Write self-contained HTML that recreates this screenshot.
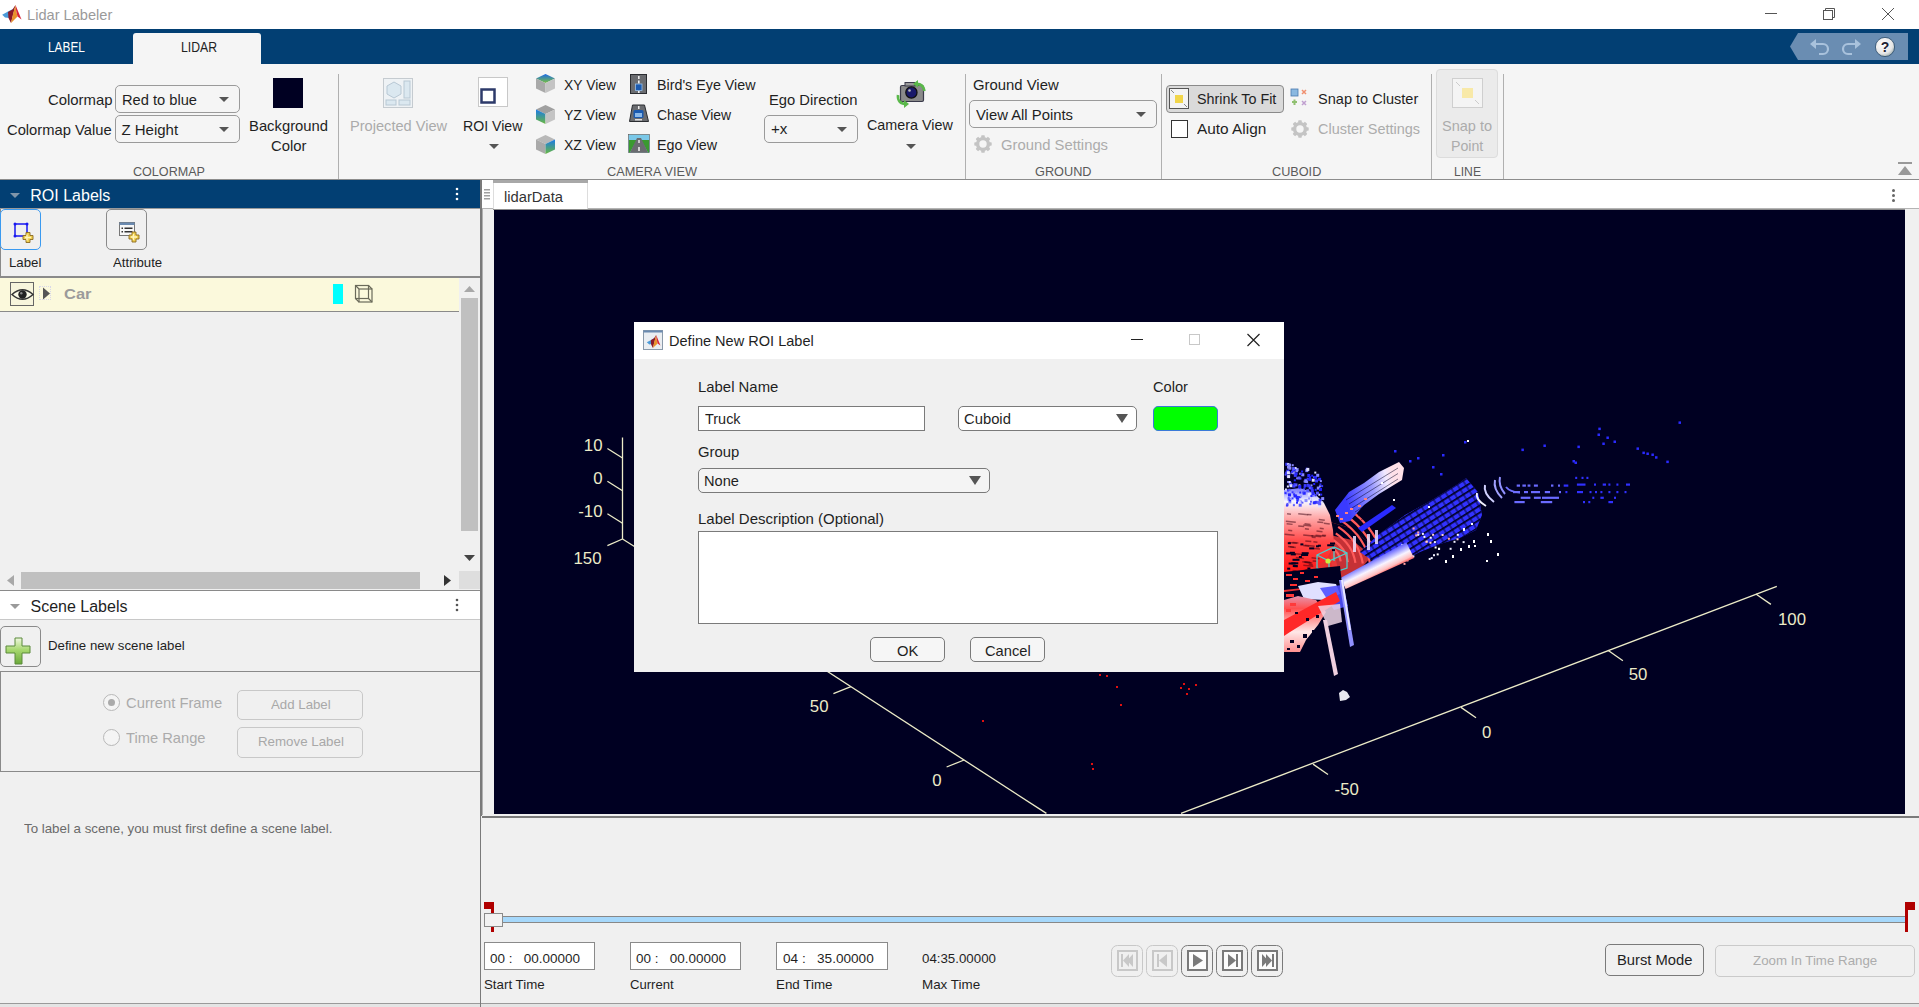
<!DOCTYPE html>
<html><head><meta charset="utf-8"><style>
html,body{margin:0;padding:0;width:1919px;height:1007px;overflow:hidden;background:#f0f0f0;}
.r{position:absolute;box-sizing:border-box;}
svg.r{overflow:visible;}
.t{position:absolute;white-space:pre;line-height:20px;font-family:"Liberation Sans",sans-serif;transform-origin:0 0;}
</style></head><body>
<div class="r" style="left:0px;top:0px;width:1919px;height:29px;background:#fff"></div>
<svg class="r" style="left:0px;top:0px;" width="24" height="25" viewBox="0 0 24 25">
<polygon points="2.2,14.8 8,11.5 13,9 12.5,14 9.5,18 5,17.5" fill="#4a9ad8"/>
<polygon points="8,12 12.5,9.5 15.5,5 14,11 11,23 8.5,18" fill="#8a1a2a"/>
<polygon points="15.5,5 16,10 17.5,16.5 11,23 13,14" fill="#e8922a"/>
<polygon points="15.5,5 21.5,19.5 17.5,16.5 16,10" fill="#d8283a"/>
</svg>
<div class="t" style="left:27.40px;top:5px;font-size:15px;color:#9a9a9a;transform:scaleX(0.9749);">Lidar Labeler</div>
<div class="r" style="left:1765px;top:13px;width:12px;height:1px;background:#555"></div>
<svg class="r" style="left:1820px;top:5px;" width="18" height="18" viewBox="0 0 18 18"><rect x="3.5" y="5.5" width="9" height="9" fill="none" stroke="#555"/><path d="M5.5 5.5V3.5H14.5V12.5H12.5" fill="none" stroke="#555"/></svg>
<svg class="r" style="left:1878px;top:5px;" width="20" height="18" viewBox="0 0 20 18"><path d="M4 3L16 15M16 3L4 15" stroke="#555" stroke-width="1"/></svg>
<div class="r" style="left:0px;top:29px;width:1919px;height:35px;background:#023f73"></div>
<div class="r" style="left:133px;top:33px;width:128px;height:31px;background:#f5f5f5;border-radius:3px 3px 0 0"></div>
<div class="t" style="left:48.10px;top:37px;font-size:14px;color:#ffffff;transform:scaleX(0.8461);">LABEL</div>
<div class="t" style="left:181.00px;top:37px;font-size:14px;color:#222;transform:scaleX(0.8732);">LIDAR</div>
<svg class="r" style="left:1788px;top:32px;" width="122" height="30" viewBox="0 0 122 30">
<polygon points="2,14.5 10,1 120,1 120,28 10,28" fill="#6a8db2"/>
<g fill="none" stroke="#a9c2dc" stroke-width="2.2">
<path d="M27 12 H35 A5 5 0 0 1 35 22 H31"/>
<path d="M68 12 H60 A5 5 0 0 0 60 22 H64"/>
</g>
<polygon points="22,12 28,7 28,17" fill="#a9c2dc"/>
<polygon points="73,12 67,7 67,17" fill="#a9c2dc"/>
<defs><radialGradient id="hg" cx="40%" cy="35%" r="70%"><stop offset="0" stop-color="#fff"/><stop offset="0.7" stop-color="#e6e6e6"/><stop offset="1" stop-color="#9aa"/></radialGradient></defs>
<circle cx="97" cy="15" r="9.6" fill="url(#hg)" stroke="#2a4a6a" stroke-width="0.8"/>
<text x="97" y="20" text-anchor="middle" font-family="Liberation Sans" font-weight="bold" font-size="14" fill="#223">?</text>
</svg>
<div class="r" style="left:0px;top:64px;width:1919px;height:115px;background:#f5f5f5"></div>
<div class="r" style="left:0px;top:179px;width:1919px;height:1px;background:#8c8c8c"></div>
<div class="r" style="left:338px;top:74px;width:1px;height:105px;background:#b0b0b0"></div>
<div class="r" style="left:965px;top:74px;width:1px;height:105px;background:#b0b0b0"></div>
<div class="r" style="left:1161px;top:74px;width:1px;height:105px;background:#b0b0b0"></div>
<div class="r" style="left:1431px;top:74px;width:1px;height:105px;background:#b0b0b0"></div>
<div class="r" style="left:1503px;top:74px;width:1px;height:105px;background:#b0b0b0"></div>
<svg class="r" style="left:1897px;top:161px;" width="16" height="16" viewBox="0 0 16 16"><rect x="1" y="1" width="14" height="2" fill="#999"/><polygon points="8,5 1,14 15,14" fill="#999"/></svg>
<div class="t" style="left:47.50px;top:90px;font-size:15px;color:#1f1f1f;transform:scaleX(0.9919);">Colormap</div>
<div class="t" style="left:7.40px;top:120px;font-size:15px;color:#1f1f1f;transform:scaleX(0.9829);">Colormap Value</div>
<div class="r" style="left:115px;top:85px;width:125px;height:28px;background:#f5f5f5;border:1px solid #9a9a9a;border-radius:5px"></div>
<div class="t" style="left:122.00px;top:90px;font-size:15px;color:#1f1f1f;transform:scaleX(0.9775);">Red to blue</div>
<svg class="r" style="left:219px;top:97px;" width="10" height="5" viewBox="0 0 10 5"><polygon points="0,0 10,0 5.0,5" fill="#555"/></svg>
<div class="r" style="left:115px;top:115px;width:125px;height:28px;background:#f5f5f5;border:1px solid #9a9a9a;border-radius:5px"></div>
<div class="t" style="left:121.40px;top:120px;font-size:15px;color:#1f1f1f;">Z Height</div>
<svg class="r" style="left:219px;top:127px;" width="10" height="5" viewBox="0 0 10 5"><polygon points="0,0 10,0 5.0,5" fill="#555"/></svg>
<div class="r" style="left:273px;top:78px;width:30px;height:30px;background:#000022"></div>
<div class="t" style="left:249.00px;top:116px;font-size:15px;color:#1f1f1f;transform:scaleX(0.9872);">Background</div>
<div class="t" style="left:270.50px;top:135.5px;font-size:15px;color:#1f1f1f;transform:scaleX(0.9902);">Color</div>
<div class="t" style="left:133.00px;top:162px;font-size:13.5px;color:#5a5a5a;transform:scaleX(0.9316);">COLORMAP</div>
<svg class="r" style="left:383px;top:78px;" width="30" height="30" viewBox="0 0 30 30">
<rect x="0.5" y="0.5" width="29" height="29" fill="#eef2f5" stroke="#c5cbd0"/>
<polygon points="11,4 18,8 18,16 11,20 4,16 4,8" fill="#dbe8f0" stroke="#b8c8d4"/>
<rect x="21" y="3" width="6" height="17" fill="#dbe8f0" stroke="#b8c8d4"/>
<rect x="3" y="22" width="10" height="5" fill="#dbe8f0" stroke="#b8c8d4"/>
<rect x="16" y="22" width="11" height="5" fill="#dbe8f0" stroke="#b8c8d4"/>
</svg>
<div class="t" style="left:349.80px;top:115.5px;font-size:15px;color:#ababab;transform:scaleX(0.9737);">Projected View</div>
<svg class="r" style="left:478px;top:77px;" width="30" height="30" viewBox="0 0 30 30">
<rect x="0.5" y="0.5" width="29" height="29" fill="#fff" stroke="#c8c8c8"/>
<rect x="3.5" y="12.5" width="13" height="13" fill="#fff" stroke="#2d3a6a" stroke-width="2.5"/>
</svg>
<div class="t" style="left:463.00px;top:115.5px;font-size:15px;color:#1f1f1f;transform:scaleX(0.9422);">ROI View</div>
<svg class="r" style="left:489px;top:144px;" width="10" height="5" viewBox="0 0 10 5"><polygon points="0,0 10,0 5.0,5" fill="#555"/></svg>
<svg class="r" style="left:535px;top:73px;" width="21" height="21" viewBox="0 0 21 21"><defs>
<linearGradient id="cgt" x1="0" y1="0" x2="0" y2="1"><stop offset="0" stop-color="#1a6ae8"/><stop offset="1" stop-color="#7ac040"/></linearGradient>
<linearGradient id="cgl" x1="0" y1="0" x2="0" y2="1"><stop offset="0" stop-color="#1a7ae8"/><stop offset="1" stop-color="#6ab840"/></linearGradient>
</defs>
<polygon points="10.5,1 20,5.5 10.5,10 1,5.5" fill="url(#cgt)"/>
<polygon points="1,5.5 10.5,10 10.5,20 1,15.5" fill="#a9a9a9"/>
<polygon points="10.5,10 20,5.5 20,15.5 10.5,20" fill="#c4c4c4"/></svg>
<svg class="r" style="left:535px;top:104px;" width="21" height="21" viewBox="0 0 21 21">
<polygon points="10.5,1 20,5.5 10.5,10 1,5.5" fill="#a0a0a0"/>
<polygon points="1,5.5 10.5,10 10.5,20 1,15.5" fill="url(#cgl)"/>
<polygon points="10.5,10 20,5.5 20,15.5 10.5,20" fill="#c4c4c4"/></svg>
<svg class="r" style="left:535px;top:134px;" width="21" height="21" viewBox="0 0 21 21">
<polygon points="10.5,1 20,5.5 10.5,10 1,5.5" fill="#b8b8b8"/>
<polygon points="1,5.5 10.5,10 10.5,20 1,15.5" fill="#a9a9a9"/>
<polygon points="10.5,10 20,5.5 20,15.5 10.5,20" fill="url(#cgl)"/></svg>
<div class="t" style="left:564.00px;top:74.6px;font-size:15px;color:#1f1f1f;transform:scaleX(0.9257);">XY View</div>
<div class="t" style="left:564.00px;top:104.8px;font-size:15px;color:#1f1f1f;transform:scaleX(0.9344);">YZ View</div>
<div class="t" style="left:564.00px;top:135px;font-size:15px;color:#1f1f1f;transform:scaleX(0.9344);">XZ View</div>
<svg class="r" style="left:629px;top:73px;" width="20" height="22" viewBox="0 0 20 22">
<rect x="1.5" y="1.5" width="16" height="19" fill="#6a6c70" stroke="#2a2c30"/>
<rect x="9" y="3" width="1.6" height="3" fill="#eee"/><rect x="9" y="7.5" width="1.6" height="3" fill="#eee"/><rect x="9" y="18" width="1.6" height="2" fill="#eee"/>
<rect x="6.5" y="11" width="6.5" height="6.5" fill="#1a5ab0" stroke="#9ac0e8" stroke-width="0.8"/>
</svg>
<svg class="r" style="left:628px;top:104px;" width="22" height="19" viewBox="0 0 22 19">
<polygon points="4.5,1 16.5,1 20.5,17.5 1.5,17.5" fill="#6a6c70" stroke="#2a2c30"/>
<rect x="10" y="2" width="1.5" height="3" fill="#eee"/>
<rect x="5.5" y="6" width="10" height="8" rx="1.5" fill="#1a5ab0"/>
<rect x="7" y="9" width="7" height="4" fill="#8ab8e8"/>
<rect x="7" y="15" width="7" height="1.5" fill="#ddd"/>
</svg>
<svg class="r" style="left:628px;top:134px;" width="22" height="19" viewBox="0 0 22 19">
<rect x="0.5" y="0.5" width="21" height="18" fill="#7ac8e8" stroke="#555" stroke-width="0.6"/>
<polygon points="1,6 9,6 2,18.5 1,18.5" fill="#3a9a30"/>
<polygon points="21,6 13,6 20,18.5 21,18.5" fill="#3a9a30"/>
<polygon points="9,4 13,4 20,18.5 2,18.5" fill="#6a6c70"/>
<rect x="10.3" y="6" width="1.4" height="3" fill="#eee"/><rect x="10.2" y="13" width="1.6" height="4" fill="#eee"/>
</svg>
<div class="t" style="left:657.40px;top:74.6px;font-size:15px;color:#1f1f1f;transform:scaleX(0.9517);">Bird&#x27;s Eye View</div>
<div class="t" style="left:657.40px;top:104.8px;font-size:15px;color:#1f1f1f;transform:scaleX(0.9298);">Chase View</div>
<div class="t" style="left:657.40px;top:135px;font-size:15px;color:#1f1f1f;transform:scaleX(0.9533);">Ego View</div>
<div class="t" style="left:768.60px;top:90px;font-size:15px;color:#1f1f1f;transform:scaleX(0.9825);">Ego Direction</div>
<div class="r" style="left:764px;top:115px;width:94px;height:28px;background:#f5f5f5;border:1px solid #9a9a9a;border-radius:5px"></div>
<div class="t" style="left:771.40px;top:119.30000000000001px;font-size:15px;color:#1f1f1f;transform:scaleX(1.0077);">+x</div>
<svg class="r" style="left:837px;top:127px;" width="10" height="5" viewBox="0 0 10 5"><polygon points="0,0 10,0 5.0,5" fill="#555"/></svg>
<svg class="r" style="left:893px;top:78px;" width="34" height="30" viewBox="0 0 34 30">
<rect x="7.5" y="7.5" width="23" height="16" rx="1.5" fill="#8a8a8a" stroke="#3a3a4a" stroke-width="1.2"/>
<rect x="12" y="4.5" width="10" height="3.5" fill="#9a9a9a" stroke="#3a3a4a" stroke-width="1"/>
<circle cx="18.4" cy="14.5" r="5.6" fill="#1a1a6a" stroke="#111" stroke-width="1.3"/>
<circle cx="16.5" cy="12.5" r="1.3" fill="#bbb"/>
<path d="M22 6 Q30 5 31.5 13" fill="none" stroke="#5ab84a" stroke-width="2.6"/>
<polygon points="20,6 25,2 25,9.5" fill="#5ab84a"/>
<path d="M5 17 Q4 26 14 26" fill="none" stroke="#5ab84a" stroke-width="2.6"/>
<polygon points="16,26 11,22 11,30" fill="#5ab84a"/>
</svg>
<div class="t" style="left:867.10px;top:115.30000000000001px;font-size:15px;color:#1f1f1f;transform:scaleX(0.9557);">Camera View</div>
<svg class="r" style="left:906px;top:144px;" width="10" height="5" viewBox="0 0 10 5"><polygon points="0,0 10,0 5.0,5" fill="#555"/></svg>
<div class="t" style="left:606.80px;top:162px;font-size:13.5px;color:#5a5a5a;transform:scaleX(0.9453);">CAMERA VIEW</div>
<div class="t" style="left:973.10px;top:75px;font-size:15px;color:#1f1f1f;transform:scaleX(0.9910);">Ground View</div>
<div class="r" style="left:969px;top:100px;width:188px;height:28px;background:#f5f5f5;border:1px solid #9a9a9a;border-radius:5px"></div>
<div class="t" style="left:975.60px;top:104.7px;font-size:15px;color:#1f1f1f;transform:scaleX(0.9888);">View All Points</div>
<svg class="r" style="left:1136px;top:112px;" width="10" height="5" viewBox="0 0 10 5"><polygon points="0,0 10,0 5.0,5" fill="#555"/></svg>
<svg class="r" style="left:974px;top:135px;" width="18" height="18" viewBox="0 0 18 18"><rect x="7.2" y="0.3" width="3.6" height="4" rx="0.8" fill="#c4c4c4" transform="rotate(0 9.0 9.0)"/><rect x="7.2" y="0.3" width="3.6" height="4" rx="0.8" fill="#c4c4c4" transform="rotate(45 9.0 9.0)"/><rect x="7.2" y="0.3" width="3.6" height="4" rx="0.8" fill="#c4c4c4" transform="rotate(90 9.0 9.0)"/><rect x="7.2" y="0.3" width="3.6" height="4" rx="0.8" fill="#c4c4c4" transform="rotate(135 9.0 9.0)"/><rect x="7.2" y="0.3" width="3.6" height="4" rx="0.8" fill="#c4c4c4" transform="rotate(180 9.0 9.0)"/><rect x="7.2" y="0.3" width="3.6" height="4" rx="0.8" fill="#c4c4c4" transform="rotate(225 9.0 9.0)"/><rect x="7.2" y="0.3" width="3.6" height="4" rx="0.8" fill="#c4c4c4" transform="rotate(270 9.0 9.0)"/><rect x="7.2" y="0.3" width="3.6" height="4" rx="0.8" fill="#c4c4c4" transform="rotate(315 9.0 9.0)"/><circle cx="9.0" cy="9.0" r="5.40" fill="none" stroke="#c4c4c4" stroke-width="3.4"/></svg>
<div class="t" style="left:1001.00px;top:135px;font-size:15px;color:#acacac;transform:scaleX(0.9873);">Ground Settings</div>
<div class="t" style="left:1034.80px;top:162px;font-size:13.5px;color:#5a5a5a;transform:scaleX(0.9415);">GROUND</div>
<div class="r" style="left:1166px;top:85px;width:118px;height:28px;background:#dadada;border:1px solid #8a8a8a;border-radius:4px"></div>
<svg class="r" style="left:1169px;top:88px;" width="20" height="21" viewBox="0 0 20 21">
<rect x="0.5" y="0.5" width="19" height="20" fill="#f4f4f4" stroke="#555"/>
<rect x="6" y="7" width="8" height="8" fill="#f2d64a"/>
<path d="M2 2 L5 5 M15 16 L18 19" stroke="#888" stroke-width="1"/>
</svg>
<div class="t" style="left:1197.40px;top:89.2px;font-size:15px;color:#1f1f1f;transform:scaleX(0.9543);">Shrink To Fit</div>
<svg class="r" style="left:1290px;top:88px;" width="19" height="20" viewBox="0 0 19 20">
<rect x="1" y="1" width="7" height="7" fill="#8ab8e0" stroke="#4a7ab0" stroke-width="0.8"/>
<path d="M12 2 L16 6 M16 2 L12 6" stroke="#f09070" stroke-width="1.5"/>
<path d="M2 14 L7 14 M4.5 11.5 L4.5 17" stroke="#90c070" stroke-width="2"/>
<path d="M12 13 L16 17 M16 13 L12 17" stroke="#c0a0d0" stroke-width="1.5"/>
</svg>
<div class="t" style="left:1317.80px;top:89.2px;font-size:15px;color:#1f1f1f;transform:scaleX(0.9698);">Snap to Cluster</div>
<div class="r" style="left:1171px;top:120px;width:17px;height:18px;background:#fff;border:1px solid #333"></div>
<div class="t" style="left:1197.40px;top:119.30000000000001px;font-size:15px;color:#1f1f1f;transform:scaleX(1.0255);">Auto Align</div>
<svg class="r" style="left:1291px;top:120px;" width="18" height="18" viewBox="0 0 18 18"><rect x="7.2" y="0.3" width="3.6" height="4" rx="0.8" fill="#c4c4c4" transform="rotate(0 9.0 9.0)"/><rect x="7.2" y="0.3" width="3.6" height="4" rx="0.8" fill="#c4c4c4" transform="rotate(45 9.0 9.0)"/><rect x="7.2" y="0.3" width="3.6" height="4" rx="0.8" fill="#c4c4c4" transform="rotate(90 9.0 9.0)"/><rect x="7.2" y="0.3" width="3.6" height="4" rx="0.8" fill="#c4c4c4" transform="rotate(135 9.0 9.0)"/><rect x="7.2" y="0.3" width="3.6" height="4" rx="0.8" fill="#c4c4c4" transform="rotate(180 9.0 9.0)"/><rect x="7.2" y="0.3" width="3.6" height="4" rx="0.8" fill="#c4c4c4" transform="rotate(225 9.0 9.0)"/><rect x="7.2" y="0.3" width="3.6" height="4" rx="0.8" fill="#c4c4c4" transform="rotate(270 9.0 9.0)"/><rect x="7.2" y="0.3" width="3.6" height="4" rx="0.8" fill="#c4c4c4" transform="rotate(315 9.0 9.0)"/><circle cx="9.0" cy="9.0" r="5.40" fill="none" stroke="#c4c4c4" stroke-width="3.4"/></svg>
<div class="t" style="left:1317.80px;top:119.30000000000001px;font-size:15px;color:#acacac;transform:scaleX(0.9641);">Cluster Settings</div>
<div class="t" style="left:1271.60px;top:161.5px;font-size:13.5px;color:#5a5a5a;transform:scaleX(0.9388);">CUBOID</div>
<div class="r" style="left:1436px;top:69px;width:62px;height:89px;background:#ebebeb;border:1px solid #dcdcdc;border-radius:4px"></div>
<svg class="r" style="left:1452px;top:78px;" width="31" height="30" viewBox="0 0 31 30">
<rect x="0.5" y="0.5" width="30" height="29" fill="#f4f4f4" stroke="#cfcfcf"/>
<rect x="10" y="10" width="11" height="10" fill="#f8e9a8"/>
<path d="M4 4 L8 8 M23 22 L27 26" stroke="#ccc" stroke-width="1"/>
</svg>
<div class="t" style="left:1442.30px;top:116px;font-size:15px;color:#acacac;transform:scaleX(0.9676);">Snap to</div>
<div class="t" style="left:1451.40px;top:136px;font-size:15px;color:#acacac;transform:scaleX(0.9444);">Point</div>
<div class="t" style="left:1454.00px;top:161.5px;font-size:13.5px;color:#5a5a5a;transform:scaleX(0.8989);">LINE</div>
<div class="r" style="left:0px;top:180px;width:481px;height:827px;background:#f0f0f0"></div>
<div class="r" style="left:480px;top:180px;width:2px;height:636px;background:#7a7a7a"></div>
<div class="r" style="left:480px;top:816px;width:1px;height:191px;background:#7a7a7a"></div>
<div class="r" style="left:0px;top:180px;width:480px;height:28px;background:#023f73"></div>
<div class="r" style="left:0px;top:208px;width:480px;height:1px;background:#9a9a9a"></div>
<svg class="r" style="left:10px;top:193px;" width="10" height="5" viewBox="0 0 10 5"><polygon points="0,0 10,0 5.0,5" fill="#7f95aa"/></svg>
<div class="t" style="left:30.30px;top:185.6px;font-size:16px;color:#ffffff;">ROI Labels</div>
<svg class="r" style="left:454px;top:187px;" width="6" height="14" viewBox="0 0 6 14"><circle cx="3" cy="2" r="1.3" fill="#fff"/><circle cx="3" cy="7" r="1.3" fill="#fff"/><circle cx="3" cy="12" r="1.3" fill="#fff"/></svg>
<div class="r" style="left:0px;top:209px;width:1px;height:68px;background:#8a8a8a"></div>
<div class="r" style="left:0px;top:276px;width:480px;height:2px;background:#8a8a8a"></div>
<div class="r" style="left:0px;top:209px;width:41px;height:41px;border:1px solid #3a9af0;border-radius:5px;background:#f0f0f0"></div>
<svg class="r" style="left:13px;top:222px;" width="22" height="20" viewBox="0 0 22 20">
<rect x="2" y="2" width="12" height="12" fill="none" stroke="#1818f0" stroke-width="1.5"/>
<circle cx="2" cy="2" r="1.5" fill="#1818f0"/><circle cx="14" cy="2" r="1.5" fill="#1818f0"/><circle cx="2" cy="14" r="1.5" fill="#1818f0"/>
<path d="M13 10.5H17V13.5H20V17.5H17V20.5H13V17.5H10V13.5H13Z" fill="#f0d050" stroke="#8a6a20" stroke-width="0.9" stroke-linejoin="round"/>
<path d="M14 12.5V18.5M12 15.5H18" stroke="#fff5c0" stroke-width="1.3"/>
</svg>
<div class="t" style="left:8.50px;top:253px;font-size:13px;color:#1f1f1f;transform:scaleX(1.0193);">Label</div>
<div class="r" style="left:106px;top:209px;width:41px;height:41px;border:1px solid #8a8a8a;border-radius:5px;background:#f0f0f0"></div>
<svg class="r" style="left:118px;top:221px;" width="22" height="20" viewBox="0 0 22 20">
<rect x="1.5" y="1.5" width="15" height="13" fill="#f8f8f8" stroke="#777" stroke-width="1"/>
<rect x="1.5" y="1.5" width="15" height="2.5" fill="#6a8ab0"/>
<rect x="3.5" y="6.5" width="1.5" height="1.5" fill="#333"/><rect x="6.5" y="6.5" width="8" height="1.5" fill="#333"/>
<rect x="3.5" y="10" width="1.5" height="1.5" fill="#333"/><rect x="6.5" y="10" width="8" height="1.5" fill="#333"/>
<path d="M14 11H18V14H21V18H18V21H14V18H11V14H14Z" fill="#f0d050" stroke="#8a6a20" stroke-width="0.9" stroke-linejoin="round"/>
<path d="M15.5 13V19M13 16H19" stroke="#fff5c0" stroke-width="1.3"/>
</svg>
<div class="t" style="left:112.80px;top:253px;font-size:13px;color:#1f1f1f;transform:scaleX(1.0160);">Attribute</div>
<div class="r" style="left:0px;top:278px;width:459px;height:33px;background:#fbf9dc"></div>
<div class="r" style="left:0px;top:311px;width:459px;height:1px;background:#8a8a8a"></div>
<div class="r" style="left:10px;top:282px;width:24px;height:24px;border:1px solid #666;background:#f7f5dc;box-sizing:border-box"></div>
<svg class="r" style="left:10px;top:282px;" width="25" height="25" viewBox="0 0 25 25">
<path d="M2 12.5 Q12.5 3 23 12.5 Q12.5 22 2 12.5Z" fill="#fafae8" stroke="#333" stroke-width="1.5"/>
<circle cx="12.5" cy="12.5" r="4.2" fill="#222"/>
<circle cx="11.3" cy="11.3" r="1.2" fill="#888"/>
</svg>
<div class="r" style="left:39px;top:286px;width:12px;height:14px;border:1px dotted #d8d8e8"></div>
<svg class="r" style="left:42px;top:287px;" width="9" height="13" viewBox="0 0 9 13"><polygon points="1,0.5 8,6.5 1,12.5" fill="#555"/></svg>
<div class="t" style="left:64.20px;top:283.6px;font-size:15px;color:#9b9b9b;font-weight:bold;transform:scaleX(1.0978);">Car</div>
<div class="r" style="left:333px;top:284px;width:10px;height:20px;background:#00ffff"></div>
<svg class="r" style="left:354px;top:284px;" width="20" height="20" viewBox="0 0 20 20">
<g fill="none" stroke="#6a6a5a" stroke-width="1.2">
<rect x="1.5" y="1.5" width="13" height="13"/><rect x="5" y="5" width="13" height="13"/>
<path d="M1.5 1.5L5 5M14.5 1.5L18 5M1.5 14.5L5 18M14.5 14.5L18 18"/></g>
</svg>
<div class="r" style="left:459px;top:278px;width:21px;height:288px;background:#f0f0f0"></div>
<svg class="r" style="left:464px;top:286px;" width="11" height="6" viewBox="0 0 11 6"><polygon points="0,6 11,6 5.5,0" fill="#a8a8a8"/></svg>
<div class="r" style="left:461px;top:298px;width:17px;height:233px;background:#c0c0c0"></div>
<svg class="r" style="left:464px;top:555px;" width="11" height="6" viewBox="0 0 11 6"><polygon points="0,0 11,0 5.5,6" fill="#444"/></svg>
<div class="r" style="left:0px;top:571px;width:480px;height:18px;background:#f0f0f0"></div>
<svg class="r" style="left:7px;top:575px;" width="7" height="11" viewBox="0 0 7 11"><polygon points="7,0 7,11 0,5.5" fill="#a8a8a8"/></svg>
<div class="r" style="left:21px;top:572px;width:399px;height:17px;background:#c0c0c0"></div>
<svg class="r" style="left:444px;top:575px;" width="7" height="11" viewBox="0 0 7 11"><polygon points="0,0 0,11 7,5.5" fill="#333"/></svg>
<div class="r" style="left:459px;top:571px;width:21px;height:18px;background:#dedede"></div>
<div class="r" style="left:0px;top:590px;width:480px;height:1px;background:#8a8a8a"></div>
<div class="r" style="left:0px;top:591px;width:480px;height:28px;background:#ffffff"></div>
<div class="r" style="left:0px;top:619px;width:480px;height:1px;background:#c8c8c8"></div>
<svg class="r" style="left:10px;top:604px;" width="10" height="5" viewBox="0 0 10 5"><polygon points="0,0 10,0 5.0,5" fill="#9a9a9a"/></svg>
<div class="t" style="left:30.50px;top:597px;font-size:16px;color:#1f1f1f;">Scene Labels</div>
<svg class="r" style="left:454px;top:598px;" width="6" height="14" viewBox="0 0 6 14"><circle cx="3" cy="2" r="1.3" fill="#555"/><circle cx="3" cy="7" r="1.3" fill="#555"/><circle cx="3" cy="12" r="1.3" fill="#555"/></svg>
<div class="r" style="left:0px;top:626px;width:41px;height:41px;border:1px solid #8a8a8a;border-radius:5px;background:#f0f0f0"></div>
<svg class="r" style="left:5px;top:637px;" width="30" height="30" viewBox="0 0 30 30">
<defs><linearGradient id="pg" x1="0" y1="0" x2="0" y2="1"><stop offset="0" stop-color="#f0f8e0"/><stop offset="0.45" stop-color="#a8d870"/><stop offset="1" stop-color="#6aa83a"/></linearGradient></defs>
<path d="M10 1H17V9H25V16H17V27H10V16H1V9H10Z" fill="url(#pg)" stroke="#5a8a3a" stroke-width="1"/>
</svg>
<div class="t" style="left:48.40px;top:635.5px;font-size:13px;color:#1f1f1f;transform:scaleX(1.0170);">Define new scene label</div>
<div class="r" style="left:0px;top:671px;width:480px;height:1px;background:#8a8a8a"></div>
<div class="r" style="left:0px;top:771px;width:480px;height:1px;background:#8a8a8a"></div>
<div class="r" style="left:0px;top:671px;width:1px;height:101px;background:#8a8a8a"></div>
<div class="r" style="left:103px;top:694px;width:17px;height:17px;border:1px solid #b8b8b8;border-radius:50%;background:#f4f4f4"></div>
<div class="r" style="left:108px;top:699px;width:7px;height:7px;background:#aaa;border-radius:50%"></div>
<div class="t" style="left:125.80px;top:692.5px;font-size:15px;color:#ababab;transform:scaleX(0.9856);">Current Frame</div>
<div class="r" style="left:103px;top:729px;width:17px;height:17px;border:1px solid #b8b8b8;border-radius:50%;background:#f4f4f4"></div>
<div class="t" style="left:125.80px;top:727.5px;font-size:15px;color:#ababab;transform:scaleX(0.9797);">Time Range</div>
<div class="r" style="left:237px;top:690px;width:126px;height:30px;border:1px solid #c8c8c8;border-radius:5px"></div>
<div class="t" style="left:270.50px;top:695px;font-size:13px;color:#a8a8a8;transform:scaleX(1.0194);">Add Label</div>
<div class="r" style="left:237px;top:727px;width:126px;height:31px;border:1px solid #c8c8c8;border-radius:5px"></div>
<div class="t" style="left:257.50px;top:732px;font-size:13px;color:#a8a8a8;transform:scaleX(1.0244);">Remove Label</div>
<div class="t" style="left:24.10px;top:819px;font-size:13px;color:#6a6a6a;transform:scaleX(1.0234);">To label a scene, you must first define a scene label.</div>
<div class="r" style="left:482px;top:180px;width:1437px;height:29px;background:#ffffff"></div>
<div class="r" style="left:482px;top:208px;width:1437px;height:1px;background:#b4b4b4"></div>
<div class="r" style="left:482px;top:209px;width:1437px;height:1px;background:#8c8c8c"></div>
<div class="r" style="left:482px;top:209px;width:11px;height:606px;background:#f0f0f0"></div>
<div class="r" style="left:482px;top:209px;width:1px;height:606px;background:#b0b0b0"></div>
<svg class="r" style="left:484px;top:189px;" width="7" height="11" viewBox="0 0 7 11"><g fill="#a0a0a0"><rect y="0" width="6" height="1.5"/><rect y="3" width="6" height="1.5"/><rect y="6" width="6" height="1.5"/><rect y="9" width="6" height="1.5"/></g></svg>
<div class="r" style="left:493px;top:180px;width:95px;height:29px;background:#ffffff;border-left:1px solid #ddd;border-right:1px solid #ddd;box-sizing:border-box"></div>
<div class="r" style="left:493px;top:180px;width:95px;height:3px;background:#a8a8a8"></div>
<div class="t" style="left:504.00px;top:186.6px;font-size:14px;color:#333;transform:scaleX(1.0523);">lidarData</div>
<svg class="r" style="left:1890px;top:188px;" width="7" height="14" viewBox="0 0 7 14"><circle cx="3.5" cy="2.5" r="1.5" fill="#666"/><circle cx="3.5" cy="7.5" r="1.5" fill="#666"/><circle cx="3.5" cy="12.5" r="1.5" fill="#666"/></svg>
<div class="r" style="left:1905px;top:209px;width:14px;height:606px;background:#f0f0f0"></div>
<svg class="r" style="left:0;top:0" width="1919" height="1007" viewBox="0 0 1919 1007">
<defs><clipPath id="dc"><rect x="494" y="210" width="1411" height="604"/></clipPath>
<linearGradient id="cone" gradientUnits="userSpaceOnUse" x1="0" y1="-8" x2="0" y2="8">
<stop offset="0" stop-color="#6a6aff"/><stop offset="0.5" stop-color="#f8f4ff"/><stop offset="0.85" stop-color="#ffc0c0"/><stop offset="1" stop-color="#ff7070"/></linearGradient>
<linearGradient id="dome" gradientUnits="userSpaceOnUse" x1="0" y1="462" x2="0" y2="575">
<stop offset="0" stop-color="#3030ff"/><stop offset="0.22" stop-color="#6a6aff"/>
<stop offset="0.35" stop-color="#f8f8ff"/><stop offset="0.48" stop-color="#ffb0b0"/>
<stop offset="0.7" stop-color="#ff4848"/><stop offset="1" stop-color="#ff1010"/></linearGradient>
<linearGradient id="wing" gradientUnits="userSpaceOnUse" x1="1345" y1="495" x2="1395" y2="485">
<stop offset="0" stop-color="#3a3aff"/><stop offset="0.55" stop-color="#9a9aff"/><stop offset="0.85" stop-color="#f0e8ff"/><stop offset="1" stop-color="#ffe0e8"/></linearGradient>
<linearGradient id="low" gradientUnits="userSpaceOnUse" x1="0" y1="585" x2="0" y2="652">
<stop offset="0" stop-color="#d0d0ff"/><stop offset="0.35" stop-color="#ff5050"/><stop offset="0.7" stop-color="#ffe8e8"/><stop offset="1" stop-color="#ff9090"/></linearGradient>
<pattern id="hstripe" width="14" height="5" patternUnits="userSpaceOnUse" patternTransform="rotate(4)">
<rect x="0" y="0" width="9" height="1.6" fill="#3a0010" opacity="0.75"/></pattern>
<pattern id="dstripe" width="6" height="6" patternUnits="userSpaceOnUse" patternTransform="rotate(-32)">
<rect x="0" y="0" width="6" height="1.7" fill="#000022"/></pattern>
<pattern id="dstripe2" width="7" height="7" patternUnits="userSpaceOnUse" patternTransform="rotate(58)">
<rect x="0" y="0" width="7" height="2" fill="#000022"/></pattern>
<pattern id="arcs" width="7" height="7" patternUnits="userSpaceOnUse" patternTransform="rotate(62)">
<rect x="0" y="0" width="7" height="4" fill="#000022"/></pattern>
</defs>
<g clip-path="url(#dc)">
<rect x="494" y="210" width="1411" height="604" fill="#000022"/>
<line x1="622.5" y1="437.5" x2="622.5" y2="539" stroke="#ecebc8" stroke-width="1.3"/>
<line x1="622.5" y1="458" x2="607.4" y2="448.5" stroke="#ecebc8" stroke-width="1.3"/>
<line x1="622.5" y1="490.7" x2="607.4" y2="481.2" stroke="#ecebc8" stroke-width="1.3"/>
<line x1="622.5" y1="523.3" x2="607.4" y2="513.8" stroke="#ecebc8" stroke-width="1.3"/>
<line x1="622.5" y1="539" x2="607.4" y2="545.6" stroke="#ecebc8" stroke-width="1.3"/>
<line x1="622.5" y1="539" x2="640" y2="550" stroke="#ecebc8" stroke-width="1.3"/>
<text x="602.5" y="451" font-family="Liberation Sans" font-size="16.8" fill="#ecebc8" text-anchor="end">10</text>
<text x="602.5" y="484" font-family="Liberation Sans" font-size="16.8" fill="#ecebc8" text-anchor="end">0</text>
<text x="602.5" y="516.5" font-family="Liberation Sans" font-size="16.8" fill="#ecebc8" text-anchor="end">-10</text>
<text x="601.5" y="564" font-family="Liberation Sans" font-size="16.8" fill="#ecebc8" text-anchor="end">150</text>
<line x1="640" y1="550" x2="1046.4" y2="813.4" stroke="#ecebc8" stroke-width="1.3"/>
<line x1="850.9" y1="686.7" x2="833.4" y2="693.7" stroke="#ecebc8" stroke-width="1.3"/>
<line x1="964.1" y1="760" x2="946.6" y2="767" stroke="#ecebc8" stroke-width="1.3"/>
<text x="828.5" y="712" font-family="Liberation Sans" font-size="16.8" fill="#ecebc8" text-anchor="end">50</text>
<text x="941.5" y="786" font-family="Liberation Sans" font-size="16.8" fill="#ecebc8" text-anchor="end">0</text>
<line x1="1181" y1="813.4" x2="1776.8" y2="586.4" stroke="#ecebc8" stroke-width="1.3"/>
<line x1="1755.9" y1="594" x2="1770.9" y2="604.4" stroke="#ecebc8" stroke-width="1.3"/>
<line x1="1607.9" y1="650.3" x2="1622.9" y2="660.6999999999999" stroke="#ecebc8" stroke-width="1.3"/>
<line x1="1461" y1="707.4" x2="1476" y2="717.8" stroke="#ecebc8" stroke-width="1.3"/>
<line x1="1313" y1="764.1" x2="1328" y2="774.5" stroke="#ecebc8" stroke-width="1.3"/>
<text x="1778" y="624.5" font-family="Liberation Sans" font-size="16.8" fill="#ecebc8" text-anchor="start">100</text>
<text x="1628.7" y="680" font-family="Liberation Sans" font-size="16.8" fill="#ecebc8" text-anchor="start">50</text>
<text x="1482" y="737.5" font-family="Liberation Sans" font-size="16.8" fill="#ecebc8" text-anchor="start">0</text>
<text x="1334.6" y="794.5" font-family="Liberation Sans" font-size="16.8" fill="#ecebc8" text-anchor="start">-50</text>
<path d="M1284 535 L1330 522 L1350 528 L1372 545 L1392 560 L1360 578 L1340 580 L1300 590 L1284 592 Z" fill="#e83030"/>
<path d="M1330 522 L1350 528 L1372 545 L1392 560 L1360 578 L1340 580 L1334 550 Z" fill="#000022"/>
<path d="M1330 535 L1352 540 L1372 556 L1358 572 L1340 578 L1332 570 Z" fill="#e83a3a" opacity="0.85"/>
<path d="M1330.9 546.7 Q1339.3 552.3 1340.7 561.4" fill="none" stroke="#ff5a5a" stroke-width="2.2"/>
<path d="M1333.3 540.0 Q1346.0 548.5 1348.0 562.1" fill="none" stroke="#ff5a5a" stroke-width="2.2"/>
<path d="M1335.8 533.4 Q1352.6 544.6 1355.4 562.8" fill="none" stroke="#ff5a5a" stroke-width="2.2"/>
<path d="M1338.2 526.8 Q1359.2 540.8 1362.8 563.5" fill="none" stroke="#ff5a5a" stroke-width="2.2"/>
<path d="M1340.7 520.1 Q1365.9 536.9 1370.1 564.2" fill="none" stroke="#ff5a5a" stroke-width="2.2"/>
<path d="M1343.2 513.5 Q1372.5 533.0 1377.5 564.9" fill="none" stroke="#ff5a5a" stroke-width="2.2"/>
<path d="M1345.6 506.8 Q1379.2 529.2 1384.8 565.6" fill="none" stroke="#ff5a5a" stroke-width="2.2"/>
<path d="M1284 490 L1300 488 L1314 493 L1324 503 L1330 515 L1333 530 L1334 545 L1326 560 L1300 575 L1284 578 Z" fill="url(#dome)"/>
<rect x="1304.8" y="544.5" width="10" height="1.5" fill="#3a0010" opacity="0.5" transform="rotate(6 1304.8 544.5)"/>
<rect x="1304.8" y="561.6" width="6" height="1.5" fill="#3a0010" opacity="0.5" transform="rotate(6 1304.8 561.6)"/>
<rect x="1292.5" y="541.7" width="6" height="1.5" fill="#3a0010" opacity="0.5" transform="rotate(6 1292.5 541.7)"/>
<rect x="1288.3" y="529.6" width="4" height="1.5" fill="#3a0010" opacity="0.5" transform="rotate(6 1288.3 529.6)"/>
<rect x="1308.8" y="563.6" width="4" height="1.5" fill="#3a0010" opacity="0.5" transform="rotate(6 1308.8 563.6)"/>
<rect x="1311.4" y="535.0" width="10" height="1.5" fill="#3a0010" opacity="0.5" transform="rotate(6 1311.4 535.0)"/>
<rect x="1314.1" y="547.7" width="6" height="1.5" fill="#3a0010" opacity="0.5" transform="rotate(6 1314.1 547.7)"/>
<rect x="1312.7" y="560.2" width="4" height="1.5" fill="#3a0010" opacity="0.5" transform="rotate(6 1312.7 560.2)"/>
<rect x="1286.7" y="523.0" width="6" height="1.5" fill="#3a0010" opacity="0.5" transform="rotate(6 1286.7 523.0)"/>
<rect x="1311.6" y="557.1" width="8" height="1.5" fill="#3a0010" opacity="0.5" transform="rotate(6 1311.6 557.1)"/>
<rect x="1304.3" y="560.9" width="6" height="1.5" fill="#3a0010" opacity="0.5" transform="rotate(6 1304.3 560.9)"/>
<rect x="1313.5" y="541.0" width="4" height="1.5" fill="#3a0010" opacity="0.5" transform="rotate(6 1313.5 541.0)"/>
<rect x="1305.0" y="528.1" width="4" height="1.5" fill="#3a0010" opacity="0.5" transform="rotate(6 1305.0 528.1)"/>
<rect x="1316.6" y="530.3" width="6" height="1.5" fill="#3a0010" opacity="0.5" transform="rotate(6 1316.6 530.3)"/>
<rect x="1307.6" y="513.7" width="4" height="1.5" fill="#3a0010" opacity="0.5" transform="rotate(6 1307.6 513.7)"/>
<rect x="1302.4" y="561.1" width="10" height="1.5" fill="#3a0010" opacity="0.5" transform="rotate(6 1302.4 561.1)"/>
<rect x="1287.1" y="513.0" width="4" height="1.5" fill="#3a0010" opacity="0.5" transform="rotate(6 1287.1 513.0)"/>
<rect x="1293.8" y="565.8" width="4" height="1.5" fill="#3a0010" opacity="0.5" transform="rotate(6 1293.8 565.8)"/>
<rect x="1305.6" y="568.9" width="10" height="1.5" fill="#3a0010" opacity="0.5" transform="rotate(6 1305.6 568.9)"/>
<rect x="1303.3" y="544.8" width="6" height="1.5" fill="#3a0010" opacity="0.5" transform="rotate(6 1303.3 544.8)"/>
<rect x="1319.8" y="527.6" width="4" height="1.5" fill="#3a0010" opacity="0.5" transform="rotate(6 1319.8 527.6)"/>
<rect x="1298.3" y="512.9" width="10" height="1.5" fill="#3a0010" opacity="0.5" transform="rotate(6 1298.3 512.9)"/>
<rect x="1318.9" y="518.8" width="6" height="1.5" fill="#3a0010" opacity="0.5" transform="rotate(6 1318.9 518.8)"/>
<rect x="1305.4" y="540.2" width="6" height="1.5" fill="#3a0010" opacity="0.5" transform="rotate(6 1305.4 540.2)"/>
<rect x="1304.6" y="523.1" width="6" height="1.5" fill="#3a0010" opacity="0.5" transform="rotate(6 1304.6 523.1)"/>
<rect x="1303.3" y="534.3" width="10" height="1.5" fill="#3a0010" opacity="0.5" transform="rotate(6 1303.3 534.3)"/>
<rect x="1303.4" y="524.3" width="8" height="1.5" fill="#3a0010" opacity="0.5" transform="rotate(6 1303.4 524.3)"/>
<rect x="1323.8" y="568.5" width="8" height="1.5" fill="#3a0010" opacity="0.5" transform="rotate(6 1323.8 568.5)"/>
<rect x="1292.6" y="569.8" width="4" height="1.5" fill="#3a0010" opacity="0.5" transform="rotate(6 1292.6 569.8)"/>
<rect x="1285.9" y="520.5" width="10" height="1.5" fill="#3a0010" opacity="0.5" transform="rotate(6 1285.9 520.5)"/>
<rect x="1295.9" y="556.8" width="8" height="1.5" fill="#3a0010" opacity="0.5" transform="rotate(6 1295.9 556.8)"/>
<rect x="1322.2" y="534.4" width="4" height="1.5" fill="#3a0010" opacity="0.5" transform="rotate(6 1322.2 534.4)"/>
<rect x="1288.1" y="545.8" width="6" height="1.5" fill="#3a0010" opacity="0.5" transform="rotate(6 1288.1 545.8)"/>
<rect x="1284.7" y="533.4" width="10" height="1.5" fill="#3a0010" opacity="0.5" transform="rotate(6 1284.7 533.4)"/>
<rect x="1289.9" y="546.1" width="6" height="1.5" fill="#3a0010" opacity="0.5" transform="rotate(6 1289.9 546.1)"/>
<rect x="1323.9" y="522.6" width="6" height="1.5" fill="#3a0010" opacity="0.5" transform="rotate(6 1323.9 522.6)"/>
<rect x="1298.3" y="525.2" width="6" height="1.5" fill="#3a0010" opacity="0.5" transform="rotate(6 1298.3 525.2)"/>
<rect x="1317.4" y="521.2" width="6" height="1.5" fill="#3a0010" opacity="0.5" transform="rotate(6 1317.4 521.2)"/>
<rect x="1315.6" y="534.5" width="10" height="1.5" fill="#3a0010" opacity="0.5" transform="rotate(6 1315.6 534.5)"/>
<rect x="1311.8" y="536.4" width="4" height="1.5" fill="#3a0010" opacity="0.5" transform="rotate(6 1311.8 536.4)"/>
<rect x="1289.0" y="541.7" width="8" height="1.5" fill="#3a0010" opacity="0.5" transform="rotate(6 1289.0 541.7)"/>
<rect x="1295.0" y="552.9" width="8" height="1.5" fill="#3a0010" opacity="0.5" transform="rotate(6 1295.0 552.9)"/>
<rect x="1303.4" y="564.5" width="10" height="1.5" fill="#3a0010" opacity="0.5" transform="rotate(6 1303.4 564.5)"/>
<rect x="1295.2" y="469.5" width="2" height="2" fill="#e0e0ff"/>
<rect x="1288.8" y="482.6" width="3" height="3" fill="#e0e0ff"/>
<rect x="1307.3" y="474.0" width="3" height="3" fill="#2a2aff"/>
<rect x="1284.6" y="473.6" width="2" height="2" fill="#5a5aff"/>
<rect x="1286.3" y="469.6" width="3" height="3" fill="#3a3aff"/>
<rect x="1305.7" y="467.7" width="2" height="2" fill="#3a3aff"/>
<rect x="1317.9" y="504.2" width="3" height="3" fill="#e0e0ff"/>
<rect x="1310.3" y="487.1" width="3" height="3" fill="#2a2aff"/>
<rect x="1285.3" y="462.8" width="3" height="3" fill="#3a3aff"/>
<rect x="1286.6" y="475.4" width="2" height="2" fill="#2a2aff"/>
<rect x="1286.9" y="485.5" width="2" height="2" fill="#e0e0ff"/>
<rect x="1318.2" y="493.7" width="2" height="2" fill="#e0e0ff"/>
<rect x="1314.1" y="501.3" width="2" height="2" fill="#3a3aff"/>
<rect x="1310.0" y="500.7" width="2" height="2" fill="#5a5aff"/>
<rect x="1316.8" y="486.6" width="3" height="3" fill="#8a8aff"/>
<rect x="1298.5" y="487.1" width="2" height="2" fill="#8a8aff"/>
<rect x="1287.0" y="489.5" width="2" height="2" fill="#3a3aff"/>
<rect x="1311.7" y="478.7" width="3" height="3" fill="#e0e0ff"/>
<rect x="1306.1" y="480.9" width="2" height="2" fill="#8a8aff"/>
<rect x="1303.7" y="484.1" width="3" height="3" fill="#3a3aff"/>
<rect x="1287.3" y="463.0" width="2" height="2" fill="#e0e0ff"/>
<rect x="1302.9" y="488.4" width="2" height="2" fill="#5a5aff"/>
<rect x="1318.1" y="477.8" width="3" height="3" fill="#2a2aff"/>
<rect x="1307.2" y="484.3" width="3" height="3" fill="#3a3aff"/>
<rect x="1319.4" y="483.4" width="2" height="2" fill="#2a2aff"/>
<rect x="1299.4" y="472.8" width="2" height="2" fill="#e0e0ff"/>
<rect x="1314.5" y="494.4" width="2" height="2" fill="#2a2aff"/>
<rect x="1298.6" y="487.1" width="2" height="2" fill="#3a3aff"/>
<rect x="1289.2" y="483.3" width="3" height="3" fill="#2020ff"/>
<rect x="1286.4" y="504.2" width="2" height="2" fill="#2a2aff"/>
<rect x="1301.1" y="473.8" width="2" height="2" fill="#2a2aff"/>
<rect x="1298.5" y="484.4" width="2" height="2" fill="#e0e0ff"/>
<rect x="1311.2" y="498.2" width="2" height="2" fill="#8a8aff"/>
<rect x="1296.2" y="497.6" width="3" height="3" fill="#3a3aff"/>
<rect x="1285.6" y="492.5" width="2" height="2" fill="#8a8aff"/>
<rect x="1295.7" y="496.0" width="3" height="3" fill="#2020ff"/>
<rect x="1289.2" y="481.6" width="2" height="2" fill="#2020ff"/>
<rect x="1293.0" y="468.1" width="3" height="3" fill="#2020ff"/>
<rect x="1288.4" y="466.7" width="3" height="3" fill="#8a8aff"/>
<rect x="1308.3" y="477.9" width="3" height="3" fill="#2020ff"/>
<rect x="1291.5" y="497.4" width="2" height="2" fill="#3a3aff"/>
<rect x="1311.1" y="494.5" width="3" height="3" fill="#8a8aff"/>
<rect x="1285.4" y="471.7" width="3" height="3" fill="#3a3aff"/>
<rect x="1310.5" y="484.4" width="2" height="2" fill="#8a8aff"/>
<rect x="1299.0" y="496.1" width="2" height="2" fill="#2a2aff"/>
<rect x="1299.6" y="500.4" width="2" height="2" fill="#5a5aff"/>
<rect x="1301.1" y="470.5" width="2" height="2" fill="#2020ff"/>
<rect x="1304.9" y="490.1" width="2" height="2" fill="#8a8aff"/>
<rect x="1301.6" y="490.0" width="2" height="2" fill="#2a2aff"/>
<rect x="1311.4" y="497.2" width="3" height="3" fill="#e0e0ff"/>
<rect x="1288.7" y="472.4" width="2" height="2" fill="#5a5aff"/>
<rect x="1321.1" y="485.1" width="2" height="2" fill="#3a3aff"/>
<rect x="1318.6" y="498.8" width="3" height="3" fill="#3a3aff"/>
<rect x="1287.1" y="481.0" width="2" height="2" fill="#8a8aff"/>
<rect x="1313.2" y="483.0" width="2" height="2" fill="#2020ff"/>
<rect x="1296.7" y="495.9" width="2" height="2" fill="#2a2aff"/>
<rect x="1289.6" y="484.2" width="3" height="3" fill="#e0e0ff"/>
<rect x="1315.9" y="491.6" width="3" height="3" fill="#5a5aff"/>
<rect x="1292.4" y="484.6" width="3" height="3" fill="#3a3aff"/>
<rect x="1305.3" y="469.1" width="3" height="3" fill="#8a8aff"/>
<rect x="1293.7" y="490.9" width="2" height="2" fill="#8a8aff"/>
<rect x="1295.6" y="468.1" width="3" height="3" fill="#8a8aff"/>
<rect x="1294.4" y="483.4" width="3" height="3" fill="#5a5aff"/>
<rect x="1298.3" y="485.1" width="3" height="3" fill="#2020ff"/>
<rect x="1318.9" y="485.4" width="2" height="2" fill="#8a8aff"/>
<rect x="1302.7" y="491.7" width="3" height="3" fill="#2020ff"/>
<rect x="1301.4" y="501.6" width="2" height="2" fill="#5a5aff"/>
<rect x="1293.4" y="483.2" width="2" height="2" fill="#3a3aff"/>
<rect x="1318.2" y="502.2" width="3" height="3" fill="#5a5aff"/>
<rect x="1296.1" y="470.2" width="2" height="2" fill="#8a8aff"/>
<rect x="1291.4" y="471.8" width="2" height="2" fill="#e0e0ff"/>
<rect x="1296.2" y="477.3" width="2" height="2" fill="#8a8aff"/>
<rect x="1288.0" y="493.4" width="3" height="3" fill="#2020ff"/>
<rect x="1307.7" y="492.9" width="3" height="3" fill="#e0e0ff"/>
<rect x="1308.1" y="497.5" width="2" height="2" fill="#8a8aff"/>
<rect x="1304.5" y="499.1" width="3" height="3" fill="#8a8aff"/>
<rect x="1292.3" y="471.3" width="3" height="3" fill="#8a8aff"/>
<rect x="1306.3" y="467.9" width="3" height="3" fill="#e0e0ff"/>
<rect x="1314.8" y="500.8" width="3" height="3" fill="#3a3aff"/>
<rect x="1296.0" y="501.7" width="2" height="2" fill="#2a2aff"/>
<rect x="1293.1" y="493.2" width="2" height="2" fill="#3a3aff"/>
<rect x="1287.7" y="497.8" width="3" height="3" fill="#5a5aff"/>
<rect x="1299.3" y="491.5" width="2" height="2" fill="#2020ff"/>
<rect x="1291.6" y="491.3" width="2" height="2" fill="#3a3aff"/>
<rect x="1310.8" y="489.3" width="3" height="3" fill="#3a3aff"/>
<rect x="1321.9" y="497.8" width="2" height="2" fill="#2020ff"/>
<rect x="1288.0" y="463.6" width="3" height="3" fill="#8a8aff"/>
<rect x="1303.6" y="486.5" width="2" height="2" fill="#2a2aff"/>
<rect x="1291.0" y="470.8" width="2" height="2" fill="#2a2aff"/>
<rect x="1286.4" y="502.9" width="2" height="2" fill="#5a5aff"/>
<rect x="1313.1" y="476.1" width="2" height="2" fill="#5a5aff"/>
<rect x="1303.6" y="480.5" width="2" height="2" fill="#8a8aff"/>
<rect x="1284.5" y="492.1" width="2" height="2" fill="#2a2aff"/>
<rect x="1299.5" y="477.5" width="2" height="2" fill="#3a3aff"/>
<rect x="1319.0" y="488.0" width="3" height="3" fill="#2020ff"/>
<rect x="1314.1" y="475.9" width="3" height="3" fill="#2020ff"/>
<rect x="1317.3" y="501.1" width="3" height="3" fill="#5a5aff"/>
<rect x="1306.8" y="483.7" width="2" height="2" fill="#3a3aff"/>
<rect x="1294.6" y="467.0" width="2" height="2" fill="#e0e0ff"/>
<rect x="1315.0" y="479.4" width="3" height="3" fill="#3a3aff"/>
<rect x="1310.4" y="495.0" width="2" height="2" fill="#2a2aff"/>
<rect x="1291.9" y="469.9" width="2" height="2" fill="#3a3aff"/>
<rect x="1297.5" y="489.5" width="2" height="2" fill="#8a8aff"/>
<rect x="1292.8" y="502.6" width="2" height="2" fill="#e0e0ff"/>
<rect x="1296.8" y="490.4" width="2" height="2" fill="#8a8aff"/>
<rect x="1304.3" y="478.8" width="3" height="3" fill="#5a5aff"/>
<rect x="1292.1" y="467.1" width="3" height="3" fill="#5a5aff"/>
<rect x="1284.9" y="488.5" width="2" height="2" fill="#e0e0ff"/>
<rect x="1293.8" y="479.3" width="2" height="2" fill="#2020ff"/>
<rect x="1293.8" y="473.9" width="3" height="3" fill="#3a3aff"/>
<rect x="1304.5" y="479.9" width="3" height="3" fill="#8a8aff"/>
<rect x="1300.9" y="489.7" width="3" height="3" fill="#8a8aff"/>
<rect x="1309.4" y="503.1" width="2" height="2" fill="#5a5aff"/>
<rect x="1298.7" y="503.7" width="3" height="3" fill="#5a5aff"/>
<rect x="1319.9" y="480.1" width="2" height="2" fill="#8a8aff"/>
<rect x="1306.7" y="477.7" width="2" height="2" fill="#3a3aff"/>
<rect x="1308.9" y="486.1" width="3" height="3" fill="#3a3aff"/>
<rect x="1311.2" y="474.7" width="2" height="2" fill="#2020ff"/>
<rect x="1306.3" y="489.2" width="3" height="3" fill="#5a5aff"/>
<rect x="1298.8" y="500.6" width="2" height="2" fill="#e0e0ff"/>
<rect x="1285.9" y="504.5" width="2" height="2" fill="#3a3aff"/>
<rect x="1314.3" y="471.6" width="2" height="2" fill="#e0e0ff"/>
<rect x="1293.5" y="494.5" width="3" height="3" fill="#2020ff"/>
<rect x="1287.7" y="496.8" width="2" height="2" fill="#5a5aff"/>
<rect x="1321.2" y="497.1" width="3" height="3" fill="#8a8aff"/>
<rect x="1288.4" y="488.8" width="2" height="2" fill="#5a5aff"/>
<rect x="1291.7" y="464.2" width="2" height="2" fill="#8a8aff"/>
<rect x="1288.7" y="481.0" width="2" height="2" fill="#e0e0ff"/>
<rect x="1301.3" y="473.3" width="3" height="3" fill="#8a8aff"/>
<rect x="1299.9" y="495.5" width="2" height="2" fill="#8a8aff"/>
<rect x="1320.2" y="493.6" width="2" height="2" fill="#2a2aff"/>
<rect x="1288.3" y="500.4" width="3" height="3" fill="#8a8aff"/>
<rect x="1316.2" y="473.8" width="3" height="3" fill="#8a8aff"/>
<rect x="1311.6" y="492.1" width="3" height="3" fill="#2a2aff"/>
<rect x="1294.6" y="472.3" width="3" height="3" fill="#2a2aff"/>
<rect x="1321.2" y="501.4" width="2" height="2" fill="#e0e0ff"/>
<rect x="1285.4" y="471.6" width="2" height="2" fill="#3a3aff"/>
<rect x="1312.7" y="501.3" width="3" height="3" fill="#2a2aff"/>
<rect x="1292.9" y="504.2" width="2" height="2" fill="#5a5aff"/>
<rect x="1297.5" y="476.5" width="3" height="3" fill="#5a5aff"/>
<rect x="1289.1" y="499.4" width="2" height="2" fill="#2020ff"/>
<rect x="1314.7" y="488.8" width="2" height="2" fill="#2a2aff"/>
<rect x="1300.1" y="473.1" width="2" height="2" fill="#2a2aff"/>
<rect x="1289.8" y="498.0" width="2" height="2" fill="#8a8aff"/>
<rect x="1295.1" y="494.6" width="2" height="2" fill="#2a2aff"/>
<rect x="1308.8" y="487.0" width="2" height="2" fill="#5a5aff"/>
<rect x="1287.0" y="465.6" width="3" height="3" fill="#8a8aff"/>
<rect x="1302.4" y="491.5" width="2" height="2" fill="#3a3aff"/>
<rect x="1286.9" y="471.2" width="3" height="3" fill="#e0e0ff"/>
<rect x="1287.1" y="475.1" width="3" height="3" fill="#e0e0ff"/>
<rect x="1296.5" y="499.9" width="2" height="2" fill="#2a2aff"/>
<rect x="1309.0" y="476.1" width="2" height="2" fill="#2020ff"/>
<path d="M1335 510 L1349 492 L1364 483 L1379 472 L1399 462 L1404 468 L1402 480 L1379 494 L1364 505 L1350 521 L1340 523 Z" fill="url(#wing)"/>
<line x1="1346" y1="500" x2="1398" y2="468.0" stroke="#000022" stroke-width="0.9" opacity="0.55"/>
<line x1="1349" y1="504" x2="1398" y2="473.5" stroke="#000022" stroke-width="0.9" opacity="0.55"/>
<line x1="1352" y1="508" x2="1398" y2="479.0" stroke="#000022" stroke-width="0.9" opacity="0.55"/>
<line x1="1355" y1="512" x2="1398" y2="484.5" stroke="#000022" stroke-width="0.9" opacity="0.55"/>
<line x1="1358" y1="516" x2="1398" y2="490.0" stroke="#000022" stroke-width="0.9" opacity="0.55"/>
<line x1="1361" y1="520" x2="1398" y2="495.5" stroke="#000022" stroke-width="0.9" opacity="0.55"/>
<line x1="1364" y1="524" x2="1398" y2="501.0" stroke="#000022" stroke-width="0.9" opacity="0.55"/>
<rect x="1336.0" y="515.0" width="3" height="2" fill="#ff8080"/>
<rect x="1340.0" y="518.0" width="3" height="2" fill="#ff8080"/>
<rect x="1345.0" y="512.0" width="3" height="2" fill="#ff8080"/>
<rect x="1350.0" y="508.0" width="3" height="2" fill="#ff8080"/>
<rect x="1358.0" y="505.0" width="3" height="2" fill="#ff8080"/>
<rect x="1364.0" y="498.0" width="3" height="2" fill="#ff8080"/>
<path d="M1358 528 L1392 505 L1396 508 L1362 532 Z" fill="#2a2aff"/>
<path d="M1360 552 L1378 535 L1405 515 L1432 500 L1458 484 L1466 478 L1478 492 L1482 515 L1476 530 L1460 538 L1440 544 L1420 552 L1400 562 L1380 566 Z" fill="#3232ff"/>
<path d="M1360 552 L1378 535 L1405 515 L1432 500 L1458 484 L1466 478 L1478 492 L1482 515 L1476 530 L1460 538 L1440 544 L1420 552 L1400 562 L1380 566 Z" fill="url(#dstripe)"/>
<path d="M1360 552 L1378 535 L1405 515 L1432 500 L1458 484 L1466 478 L1478 492 L1482 515 L1476 530 L1460 538 L1440 544 L1420 552 L1400 562 L1380 566 Z" fill="url(#dstripe2)" opacity="0.45"/>
<rect x="1449.6" y="547.8" width="2" height="2" fill="#f0f0ff"/>
<rect x="1430.7" y="557.1" width="2" height="2" fill="#f0f0ff"/>
<rect x="1432.1" y="533.8" width="2" height="2" fill="#ffd0d0"/>
<rect x="1405.9" y="558.1" width="2" height="2" fill="#ffffff"/>
<rect x="1425.4" y="540.8" width="2" height="2" fill="#ffa0a0"/>
<rect x="1425.8" y="540.6" width="2" height="2" fill="#ffd0d0"/>
<rect x="1412.4" y="555.4" width="2" height="2" fill="#f0f0ff"/>
<rect x="1456.8" y="533.8" width="2" height="2" fill="#ffffff"/>
<rect x="1438.1" y="547.7" width="2" height="2" fill="#ffffff"/>
<rect x="1404.5" y="546.9" width="2" height="2" fill="#ffffff"/>
<rect x="1423.4" y="535.9" width="2" height="2" fill="#ffffff"/>
<rect x="1462.9" y="528.4" width="2" height="2" fill="#ffd0d0"/>
<rect x="1406.8" y="557.7" width="2" height="2" fill="#ffa0a0"/>
<rect x="1417.2" y="533.8" width="2" height="2" fill="#f0f0ff"/>
<rect x="1453.5" y="540.8" width="2" height="2" fill="#f0f0ff"/>
<rect x="1456.5" y="538.3" width="2" height="2" fill="#ffd0d0"/>
<rect x="1434.6" y="546.5" width="2" height="2" fill="#ffffff"/>
<rect x="1428.7" y="558.0" width="2" height="2" fill="#f0f0ff"/>
<rect x="1436.7" y="553.4" width="2" height="2" fill="#ffffff"/>
<rect x="1429.5" y="541.8" width="2" height="2" fill="#ffd0d0"/>
<rect x="1417.2" y="531.5" width="2" height="2" fill="#ffa0a0"/>
<rect x="1447.9" y="537.8" width="2" height="2" fill="#ffa0a0"/>
<rect x="1429.7" y="536.7" width="2" height="2" fill="#ffffff"/>
<rect x="1433.0" y="554.2" width="2" height="2" fill="#f0f0ff"/>
<rect x="1412.6" y="527.5" width="2" height="2" fill="#ffa0a0"/>
<rect x="1401.2" y="544.2" width="2" height="2" fill="#ffffff"/>
<rect x="1421.9" y="532.9" width="2" height="2" fill="#f0f0ff"/>
<rect x="1415.2" y="534.4" width="2" height="2" fill="#ffa0a0"/>
<rect x="1441.6" y="534.0" width="2" height="2" fill="#ffd0d0"/>
<rect x="1462.6" y="541.1" width="2" height="2" fill="#f0f0ff"/>
<rect x="1433.9" y="541.1" width="2" height="2" fill="#f0f0ff"/>
<rect x="1406.5" y="559.5" width="2" height="2" fill="#ffa0a0"/>
<rect x="1403.5" y="562.9" width="2" height="2" fill="#ffa0a0"/>
<rect x="1445.0" y="560.0" width="2" height="3" fill="#ffffff"/>
<rect x="1452.0" y="555.0" width="2" height="3" fill="#ffffff"/>
<rect x="1460.0" y="548.0" width="2" height="3" fill="#ffffff"/>
<rect x="1468.0" y="545.0" width="2" height="3" fill="#ffffff"/>
<rect x="1473.0" y="540.0" width="2" height="3" fill="#ffffff"/>
<rect x="1463.0" y="528.0" width="2" height="3" fill="#ffffff"/>
<rect x="1487.0" y="533.0" width="2" height="3" fill="#ffffff"/>
<rect x="1490.0" y="540.0" width="2" height="3" fill="#ffffff"/>
<rect x="1497.0" y="553.0" width="2" height="3" fill="#ffffff"/>
<rect x="1353" y="536" width="3" height="16" fill="#f0e0ff" opacity="0.85"/>
<rect x="1367" y="534" width="3" height="16" fill="#f0e0ff" opacity="0.85"/>
<rect x="1375" y="530" width="3" height="14" fill="#f0e0ff" opacity="0.85"/>
<path d="M0 -6 L75 -9 L75 8.5 L0 6 Z" fill="url(#cone)" transform="translate(1343,583.5) rotate(-26.2)"/>
<g fill="none" stroke="#48d0d0" stroke-width="1.25"><path d="M1317 555 L1334 547 L1347 553 L1347 568 L1329 574 L1317 568 Z M1317 555 L1329 561 L1347 553 M1329 561 L1329 574 M1334 547 L1334 561"/></g>
<circle cx="1328" cy="561" r="2.6" fill="#c8f040"/>
<path d="M1284 572 L1340 566 L1342 584 L1284 590 Z" fill="#000022"/>
<rect x="1286.0" y="574.0" width="6" height="2" fill="#ff3030"/>
<rect x="1293.0" y="578.0" width="5" height="2" fill="#ff3030"/>
<rect x="1300.0" y="572.0" width="4" height="2" fill="#ff3030"/>
<rect x="1290.0" y="584.0" width="7" height="2" fill="#ff3030"/>
<rect x="1305.0" y="580.0" width="5" height="2" fill="#ff3030"/>
<rect x="1314.0" y="576.0" width="4" height="2" fill="#ff3030"/>
<rect x="1322.0" y="583.0" width="3" height="2" fill="#ff3030"/>
<path d="M1298 586 L1318 582 L1336 584 L1340 594 L1326 600 L1304 599 Z" fill="#e0e0ff"/>
<path d="M1320 588 L1342 585 L1348 606 L1334 610 Z" fill="#5050ff" opacity="0.9"/>
<path d="M1284 600 L1298 596 L1316 600 L1326 612 L1318 625 L1306 640 L1300 652 L1284 652 Z" fill="url(#low)"/>
<path d="M1284 620 L1336 592 L1340 601 L1290 632 L1284 636 Z" fill="#ff2828"/>
<path d="M1318 606 L1340 604 L1342 622 L1328 626 Z" fill="#f0d8e8" opacity="0.85"/>
<rect x="1290.0" y="640.0" width="4" height="3" fill="#000022"/>
<rect x="1297.0" y="645.0" width="3" height="3" fill="#000022"/>
<rect x="1303.0" y="634.0" width="4" height="4" fill="#000022"/>
<rect x="1312.0" y="630.0" width="5" height="3" fill="#000022"/>
<rect x="1295.0" y="612.0" width="3" height="2" fill="#000022"/>
<rect x="1306.0" y="618.0" width="3" height="3" fill="#000022"/>
<rect x="1287.0" y="648.0" width="3" height="2" fill="#000022"/>
<rect x="1316.0" y="615.0" width="3" height="3" fill="#000022"/>
<rect x="1286.0" y="594.0" width="8" height="3" fill="#ff3a3a"/>
<rect x="1290.0" y="603.0" width="6" height="3" fill="#ff3a3a"/>
<rect x="1286.0" y="609.0" width="5" height="3" fill="#ff3a3a"/>
<rect x="1287.2" y="567.7" width="3" height="2" fill="#000022"/>
<rect x="1309.2" y="547.4" width="5" height="2" fill="#000022"/>
<rect x="1317.9" y="544.7" width="3" height="2" fill="#000022"/>
<rect x="1327.2" y="544.3" width="7" height="2" fill="#000022"/>
<rect x="1291.3" y="562.3" width="7" height="2" fill="#000022"/>
<rect x="1298.9" y="556.0" width="3" height="2" fill="#000022"/>
<rect x="1316.0" y="545.3" width="3" height="2" fill="#000022"/>
<rect x="1330.0" y="542.5" width="5" height="2" fill="#000022"/>
<rect x="1288.6" y="562.5" width="7" height="2" fill="#000022"/>
<rect x="1332.0" y="549.1" width="3" height="2" fill="#000022"/>
<rect x="1307.4" y="567.5" width="3" height="2" fill="#000022"/>
<rect x="1286.1" y="552.4" width="5" height="2" fill="#000022"/>
<rect x="1292.8" y="565.0" width="5" height="2" fill="#000022"/>
<rect x="1301.7" y="552.2" width="7" height="2" fill="#000022"/>
<rect x="1301.1" y="554.0" width="7" height="2" fill="#000022"/>
<rect x="1287.8" y="542.2" width="3" height="2" fill="#000022"/>
<rect x="1289.9" y="551.8" width="5" height="2" fill="#000022"/>
<rect x="1290.8" y="553.4" width="5" height="2" fill="#000022"/>
<rect x="1300.4" y="543.4" width="3" height="2" fill="#000022"/>
<rect x="1292.5" y="558.8" width="7" height="2" fill="#000022"/>
<path d="M1339 580 L1343 580 L1354 645 L1350 647 Z" fill="#9090ff"/>
<path d="M1341 580 L1343 580 L1351 630 L1349 630 Z" fill="#e8e8ff"/>
<path d="M1323 620 L1327 620 L1338 674 L1334 676 Z" fill="#f0d0e0"/>
<path d="M1339 693 L1343 690 L1347 692 L1350 697 L1346 700 L1340 701 Z" fill="#e8e8f0"/>
<rect x="1521.4" y="448.6" width="2.5" height="2.5" fill="#2a2aff"/>
<rect x="1543.4" y="444.5" width="2.5" height="2.5" fill="#2a2aff"/>
<rect x="1577.4" y="445.6" width="2.5" height="2.5" fill="#2a2aff"/>
<rect x="1598.3" y="427.6" width="2.5" height="2.5" fill="#2a2aff"/>
<rect x="1597.5" y="433.5" width="2.5" height="2.5" fill="#2a2aff"/>
<rect x="1606.4" y="436.5" width="2.5" height="2.5" fill="#2a2aff"/>
<rect x="1602.3" y="442.5" width="2.5" height="2.5" fill="#2a2aff"/>
<rect x="1613.5" y="440.5" width="2.5" height="2.5" fill="#2a2aff"/>
<rect x="1636.5" y="447.4" width="2.5" height="2.5" fill="#2a2aff"/>
<rect x="1642.4" y="451.6" width="2.5" height="2.5" fill="#2a2aff"/>
<rect x="1646.4" y="452.5" width="2.5" height="2.5" fill="#2a2aff"/>
<rect x="1651.4" y="453.5" width="2.5" height="2.5" fill="#2a2aff"/>
<rect x="1655.0" y="456.2" width="2.5" height="2.5" fill="#2a2aff"/>
<rect x="1666.3" y="460.6" width="2.5" height="2.5" fill="#2a2aff"/>
<rect x="1678.5" y="421.4" width="2.5" height="2.5" fill="#2a2aff"/>
<rect x="1572.5" y="460.0" width="2.5" height="2.5" fill="#2a2aff"/>
<rect x="1574.5" y="461.5" width="2.5" height="2.5" fill="#2a2aff"/>
<rect x="1464.0" y="441.0" width="2.5" height="2.5" fill="#2a2aff"/>
<rect x="1442.0" y="454.0" width="2.5" height="2.5" fill="#2a2aff"/>
<rect x="1409.0" y="460.0" width="2.5" height="2.5" fill="#2a2aff"/>
<rect x="1417.0" y="457.0" width="2.5" height="2.5" fill="#2a2aff"/>
<rect x="1440.0" y="473.0" width="2.5" height="2.5" fill="#2a2aff"/>
<rect x="1432.0" y="466.0" width="2.5" height="2.5" fill="#2a2aff"/>
<rect x="1394.0" y="450.0" width="2.5" height="2.5" fill="#2a2aff"/>
<rect x="1516.7" y="484.5" width="3.3" height="2.2" fill="#6a6aff"/>
<rect x="1522.4" y="484.5" width="3.5" height="2.2" fill="#6a6aff"/>
<rect x="1527.6" y="484.5" width="2.8" height="2.2" fill="#6a6aff"/>
<rect x="1533.9" y="484.5" width="4.0" height="2.2" fill="#6a6aff"/>
<rect x="1551.0" y="484.5" width="2.4" height="2.2" fill="#6a6aff"/>
<rect x="1558.0" y="484.5" width="2.0" height="2.2" fill="#6a6aff"/>
<rect x="1563.7" y="484.5" width="4.6" height="2.2" fill="#3030ff"/>
<rect x="1575.2" y="476.8" width="2.0" height="2.2" fill="#3030ff"/>
<rect x="1581.5" y="476.8" width="2.0" height="2.2" fill="#3030ff"/>
<rect x="1586.4" y="476.8" width="2.0" height="2.2" fill="#3030ff"/>
<rect x="1576.9" y="483.5" width="8.6" height="2.2" fill="#3030ff"/>
<rect x="1594.0" y="483.5" width="2.0" height="2.2" fill="#3030ff"/>
<rect x="1602.7" y="483.5" width="3.3" height="2.2" fill="#3030ff"/>
<rect x="1608.4" y="483.5" width="2.0" height="2.2" fill="#3030ff"/>
<rect x="1616.4" y="483.5" width="2.0" height="2.2" fill="#3030ff"/>
<rect x="1626.0" y="483.5" width="4.0" height="2.2" fill="#3030ff"/>
<rect x="1513.0" y="491.0" width="7.0" height="2.2" fill="#6a6aff"/>
<rect x="1524.0" y="491.0" width="4.0" height="2.2" fill="#6a6aff"/>
<rect x="1531.0" y="491.0" width="9.0" height="2.2" fill="#6a6aff"/>
<rect x="1544.8" y="491.0" width="5.2" height="2.2" fill="#6a6aff"/>
<rect x="1559.0" y="491.0" width="2.0" height="2.2" fill="#6a6aff"/>
<rect x="1565.4" y="491.0" width="2.0" height="2.2" fill="#3030ff"/>
<rect x="1577.0" y="491.0" width="6.0" height="2.2" fill="#3030ff"/>
<rect x="1589.5" y="491.0" width="2.0" height="2.2" fill="#3030ff"/>
<rect x="1595.0" y="491.0" width="2.0" height="2.2" fill="#3030ff"/>
<rect x="1600.4" y="491.0" width="2.0" height="2.2" fill="#3030ff"/>
<rect x="1608.4" y="491.0" width="2.0" height="2.2" fill="#3030ff"/>
<rect x="1616.4" y="491.0" width="2.0" height="2.2" fill="#3030ff"/>
<rect x="1624.5" y="491.0" width="2.0" height="2.2" fill="#3030ff"/>
<rect x="1520.7" y="496.7" width="9.7" height="2.2" fill="#6a6aff"/>
<rect x="1533.9" y="496.7" width="6.9" height="2.2" fill="#6a6aff"/>
<rect x="1542.0" y="496.7" width="17.0" height="2.2" fill="#6a6aff"/>
<rect x="1592.3" y="496.7" width="2.0" height="2.2" fill="#3030ff"/>
<rect x="1600.4" y="496.7" width="3.4" height="2.2" fill="#3030ff"/>
<rect x="1614.0" y="496.7" width="2.0" height="2.2" fill="#3030ff"/>
<rect x="1514.4" y="501.0" width="10.3" height="2.2" fill="#6a6aff"/>
<rect x="1540.8" y="501.0" width="11.4" height="2.2" fill="#6a6aff"/>
<rect x="1583.0" y="501.0" width="2.0" height="2.2" fill="#3030ff"/>
<rect x="1588.3" y="501.0" width="2.0" height="2.2" fill="#3030ff"/>
<rect x="1608.4" y="501.0" width="4.6" height="2.2" fill="#3030ff"/>
<path d="M1485 485 Q1483 493.5 1494 502" fill="none" stroke="#d0d0ff" stroke-width="2"/>
<path d="M1495 480 Q1493 489.0 1502 498" fill="none" stroke="#a0a0ff" stroke-width="2"/>
<path d="M1500 477 Q1498 485.5 1505 494" fill="none" stroke="#9090ff" stroke-width="2"/>
<path d="M1477 493 Q1475 499.5 1486 506" fill="none" stroke="#f0f0ff" stroke-width="2"/>
<path d="M1506 487 Q1510 492 1520 492.5" fill="none" stroke="#7070ff" stroke-width="2"/>
<rect x="1467.0" y="440.0" width="2" height="2" fill="#ffffff"/>
<rect x="1381.0" y="482.0" width="2" height="2" fill="#ffffff"/>
<rect x="1428.0" y="506.0" width="2" height="2" fill="#ffffff"/>
<rect x="1438.0" y="548.0" width="2" height="2" fill="#ffffff"/>
<rect x="1471.0" y="523.0" width="2" height="2" fill="#ffffff"/>
<rect x="1474.0" y="545.0" width="2" height="2" fill="#ffffff"/>
<rect x="1486.0" y="560.0" width="2" height="2" fill="#ffffff"/>
<rect x="1393.0" y="499.0" width="2" height="2" fill="#ffffff"/>
<rect x="982.0" y="720.0" width="2" height="2" fill="#e01010"/>
<rect x="1099.0" y="674.0" width="2" height="2" fill="#e01010"/>
<rect x="1106.0" y="675.0" width="2" height="2" fill="#e01010"/>
<rect x="1116.0" y="686.0" width="2" height="2" fill="#e01010"/>
<rect x="1120.0" y="704.0" width="2" height="2" fill="#e01010"/>
<rect x="1091.0" y="763.0" width="2" height="2" fill="#e01010"/>
<rect x="1092.0" y="768.0" width="2" height="2" fill="#e01010"/>
<rect x="1183.0" y="683.0" width="2" height="2" fill="#e01010"/>
<rect x="1188.0" y="688.0" width="2" height="2" fill="#e01010"/>
<rect x="1195.0" y="684.0" width="2" height="2" fill="#e01010"/>
<rect x="1186.0" y="693.0" width="2" height="2" fill="#e01010"/>
<rect x="1180.0" y="687.0" width="2" height="2" fill="#e01010"/>
</g></svg>
<div class="r" style="left:482px;top:816px;width:1437px;height:2px;background:#7a7a7a"></div>
<div class="r" style="left:482px;top:818px;width:1437px;height:189px;background:#f0f0f0"></div>
<div class="r" style="left:481px;top:816px;width:1px;height:191px;background:#f0f0f0"></div>
<div class="r" style="left:0px;top:1003px;width:1919px;height:1px;background:#9a9a9a"></div>
<div class="r" style="left:0px;top:1004px;width:1919px;height:3px;background:#e4e4e4"></div>
<div class="r" style="left:480px;top:1003px;width:1px;height:4px;background:#7a7a7a"></div>
<div class="r" style="left:500px;top:916px;width:1406px;height:7px;background:#a6d8fb;border-top:1px solid #888;border-bottom:1px solid #888;box-sizing:border-box"></div>
<div class="r" style="left:484px;top:902px;width:10px;height:7px;background:#b00000"></div>
<div class="r" style="left:491px;top:902px;width:3px;height:30px;background:#b00000"></div>
<div class="r" style="left:484px;top:913px;width:19px;height:14px;background:#f2f2f2;border:1px solid #8a8a8a;box-sizing:border-box"></div>
<div class="r" style="left:1905px;top:902px;width:3px;height:30px;background:#b00000"></div>
<div class="r" style="left:1905px;top:902px;width:10px;height:8px;background:#b00000"></div>
<div class="r" style="left:484px;top:942px;width:111px;height:28px;background:#fff;border:1px solid #8a8a8a;box-sizing:border-box"></div>
<div class="t" style="left:490.40px;top:949px;font-size:13px;color:#1f1f1f;transform:scaleX(1.0368);">00 :   00.00000</div>
<div class="r" style="left:630px;top:942px;width:111px;height:28px;background:#fff;border:1px solid #8a8a8a;box-sizing:border-box"></div>
<div class="t" style="left:636.40px;top:949px;font-size:13px;color:#1f1f1f;transform:scaleX(1.0368);">00 :   00.00000</div>
<div class="r" style="left:776px;top:942px;width:112px;height:28px;background:#fff;border:1px solid #8a8a8a;box-sizing:border-box"></div>
<div class="t" style="left:782.50px;top:949px;font-size:13px;color:#1f1f1f;transform:scaleX(1.0460);">04 :   35.00000</div>
<div class="t" style="left:922.40px;top:948.5px;font-size:13px;color:#1f1f1f;transform:scaleX(1.0224);">04:35.00000</div>
<div class="t" style="left:484.30px;top:974.5px;font-size:13px;color:#1f1f1f;transform:scaleX(1.0234);">Start Time</div>
<div class="t" style="left:630.30px;top:974.5px;font-size:13px;color:#1f1f1f;transform:scaleX(1.0080);">Current</div>
<div class="t" style="left:776.30px;top:974.5px;font-size:13px;color:#1f1f1f;transform:scaleX(1.0287);">End Time</div>
<div class="t" style="left:922.40px;top:974.5px;font-size:13px;color:#1f1f1f;transform:scaleX(1.0310);">Max Time</div>
<svg class="r" style="left:1111px;top:945px;" width="32" height="32" viewBox="0 0 32 32"><rect x="0.5" y="0.5" width="31" height="31" rx="6" fill="none" stroke="#c8c8c8"/><rect x="7" y="6" width="19" height="19" fill="#f0f0f0" stroke="#c8c8c8" stroke-width="2"/><rect x="10" y="9" width="2" height="13" fill="#c8c8c8"/><polygon points="12,15.5 18,9 18,22" fill="#c8c8c8"/><polygon points="16,15.5 22,9 22,22" fill="#c8c8c8"/></svg>
<svg class="r" style="left:1146px;top:945px;" width="32" height="32" viewBox="0 0 32 32"><rect x="0.5" y="0.5" width="31" height="31" rx="6" fill="none" stroke="#c8c8c8"/><rect x="7" y="6" width="19" height="19" fill="#f0f0f0" stroke="#c8c8c8" stroke-width="2"/><rect x="11" y="9" width="2" height="13" fill="#c8c8c8"/><polygon points="13,15.5 21,9 21,22" fill="#c8c8c8"/></svg>
<svg class="r" style="left:1181px;top:945px;" width="32" height="32" viewBox="0 0 32 32"><rect x="0.5" y="0.5" width="31" height="31" rx="6" fill="none" stroke="#7a7a7a"/><rect x="7" y="6" width="19" height="19" fill="#fcfcfc" stroke="#7a7a7a" stroke-width="2"/><polygon points="12,9 22,15.5 12,22" fill="#7a7a7a"/></svg>
<svg class="r" style="left:1216px;top:945px;" width="32" height="32" viewBox="0 0 32 32"><rect x="0.5" y="0.5" width="31" height="31" rx="6" fill="none" stroke="#7a7a7a"/><rect x="7" y="6" width="19" height="19" fill="#fcfcfc" stroke="#7a7a7a" stroke-width="2"/><polygon points="12,9 20,15.5 12,22" fill="#7a7a7a"/><rect x="20" y="9" width="2" height="13" fill="#7a7a7a"/></svg>
<svg class="r" style="left:1251px;top:945px;" width="32" height="32" viewBox="0 0 32 32"><rect x="0.5" y="0.5" width="31" height="31" rx="6" fill="none" stroke="#7a7a7a"/><rect x="7" y="6" width="19" height="19" fill="#fcfcfc" stroke="#7a7a7a" stroke-width="2"/><polygon points="11,9 17,15.5 11,22" fill="#7a7a7a"/><polygon points="15,9 21,15.5 15,22" fill="#7a7a7a"/><rect x="21" y="9" width="2" height="13" fill="#7a7a7a"/></svg>
<div class="r" style="left:1605px;top:944px;width:99px;height:32px;border:1px solid #7a7a7a;border-radius:5px;box-sizing:border-box"></div>
<div class="t" style="left:1617.40px;top:950px;font-size:15px;color:#1f1f1f;transform:scaleX(0.9840);">Burst Mode</div>
<div class="r" style="left:1715px;top:945px;width:200px;height:32px;border:1px solid #cacaca;border-radius:5px;box-sizing:border-box"></div>
<div class="t" style="left:1752.50px;top:951px;font-size:13px;color:#acacac;transform:scaleX(1.0237);">Zoom In Time Range</div>
<div class="r" style="left:634px;top:322px;width:650px;height:350px;background:#f0f0f0"></div>
<div class="r" style="left:634px;top:322px;width:650px;height:37px;background:#ffffff"></div>
<svg class="r" style="left:643px;top:330px;" width="20" height="20" viewBox="0 0 20 20">
<rect x="0.5" y="0.5" width="19" height="19" fill="#eaeef2" stroke="#8a9aaa"/>
<rect x="0.5" y="0.5" width="19" height="2" fill="#6a8ab0"/>
<g transform="translate(2,1.5) scale(0.72)">
<polygon points="2.5,15 8,12 12.5,9.5 10.5,17 6,18" fill="#4a9ad8"/>
<polygon points="8,12 12.5,9.5 15.5,5 14,11 11,23 8.5,18" fill="#8a1a2a"/>
<polygon points="15.5,5 16,10 17.5,16.5 11,23 13,14" fill="#e8922a"/>
<polygon points="15.5,5 21.5,19.5 17.5,16.5 16,10" fill="#d8283a"/></g>
</svg>
<div class="t" style="left:668.50px;top:331px;font-size:15px;color:#1f1f1f;transform:scaleX(0.9702);">Define New ROI Label</div>
<div class="r" style="left:1131px;top:339px;width:12px;height:1px;background:#222"></div>
<div class="r" style="left:1189px;top:334px;width:11px;height:11px;border:1px solid #c8c8c8;box-sizing:border-box"></div>
<svg class="r" style="left:1246px;top:333px;" width="15" height="14" viewBox="0 0 15 14"><path d="M1.5 1L13.5 13M13.5 1L1.5 13" stroke="#222" stroke-width="1.2"/></svg>
<div class="t" style="left:698.10px;top:377.3px;font-size:15px;color:#1f1f1f;transform:scaleX(0.9932);">Label Name</div>
<div class="r" style="left:698px;top:406px;width:227px;height:25px;background:#fff;border:1px solid #7a7a7a;box-sizing:border-box"></div>
<div class="t" style="left:705.00px;top:409px;font-size:15px;color:#1f1f1f;transform:scaleX(0.9636);">Truck</div>
<div class="r" style="left:958px;top:406px;width:179px;height:25px;background:#fff;border:1px solid #7a7a7a;border-radius:5px;box-sizing:border-box"></div>
<div class="t" style="left:964.40px;top:409px;font-size:15px;color:#1f1f1f;transform:scaleX(0.9863);">Cuboid</div>
<svg class="r" style="left:1116px;top:414px;" width="12" height="9" viewBox="0 0 12 9"><polygon points="0,0 12,0 6,9" fill="#555"/></svg>
<div class="t" style="left:1153.00px;top:377.3px;font-size:15px;color:#1f1f1f;transform:scaleX(0.9763);">Color</div>
<div class="r" style="left:1153px;top:406px;width:65px;height:25px;background:#00ff00;border:1px solid #3a7ad8;border-radius:5px;box-sizing:border-box"></div>
<div class="t" style="left:698.00px;top:442px;font-size:15px;color:#1f1f1f;transform:scaleX(0.9904);">Group</div>
<div class="r" style="left:698px;top:468px;width:292px;height:25px;background:#f4f4f4;border:1px solid #7a7a7a;border-radius:5px;box-sizing:border-box"></div>
<div class="t" style="left:704.40px;top:471px;font-size:15px;color:#1f1f1f;transform:scaleX(0.9735);">None</div>
<svg class="r" style="left:969px;top:476px;" width="12" height="9" viewBox="0 0 12 9"><polygon points="0,0 12,0 6,9" fill="#555"/></svg>
<div class="t" style="left:698.00px;top:508.5px;font-size:15px;color:#1f1f1f;">Label Description (Optional)</div>
<div class="r" style="left:698px;top:531px;width:520px;height:93px;background:#fff;border:1px solid #7a7a7a;box-sizing:border-box"></div>
<div class="r" style="left:870px;top:637px;width:75px;height:25px;background:#f6f6f6;border:1px solid #7a7a7a;border-radius:5px;box-sizing:border-box"></div>
<div class="t" style="left:897.40px;top:641.3px;font-size:15px;color:#1f1f1f;transform:scaleX(0.9827);">OK</div>
<div class="r" style="left:970px;top:637px;width:75px;height:25px;background:#f6f6f6;border:1px solid #7a7a7a;border-radius:5px;box-sizing:border-box"></div>
<div class="t" style="left:985.00px;top:641.3px;font-size:15px;color:#1f1f1f;transform:scaleX(0.9781);">Cancel</div>
</body></html>
